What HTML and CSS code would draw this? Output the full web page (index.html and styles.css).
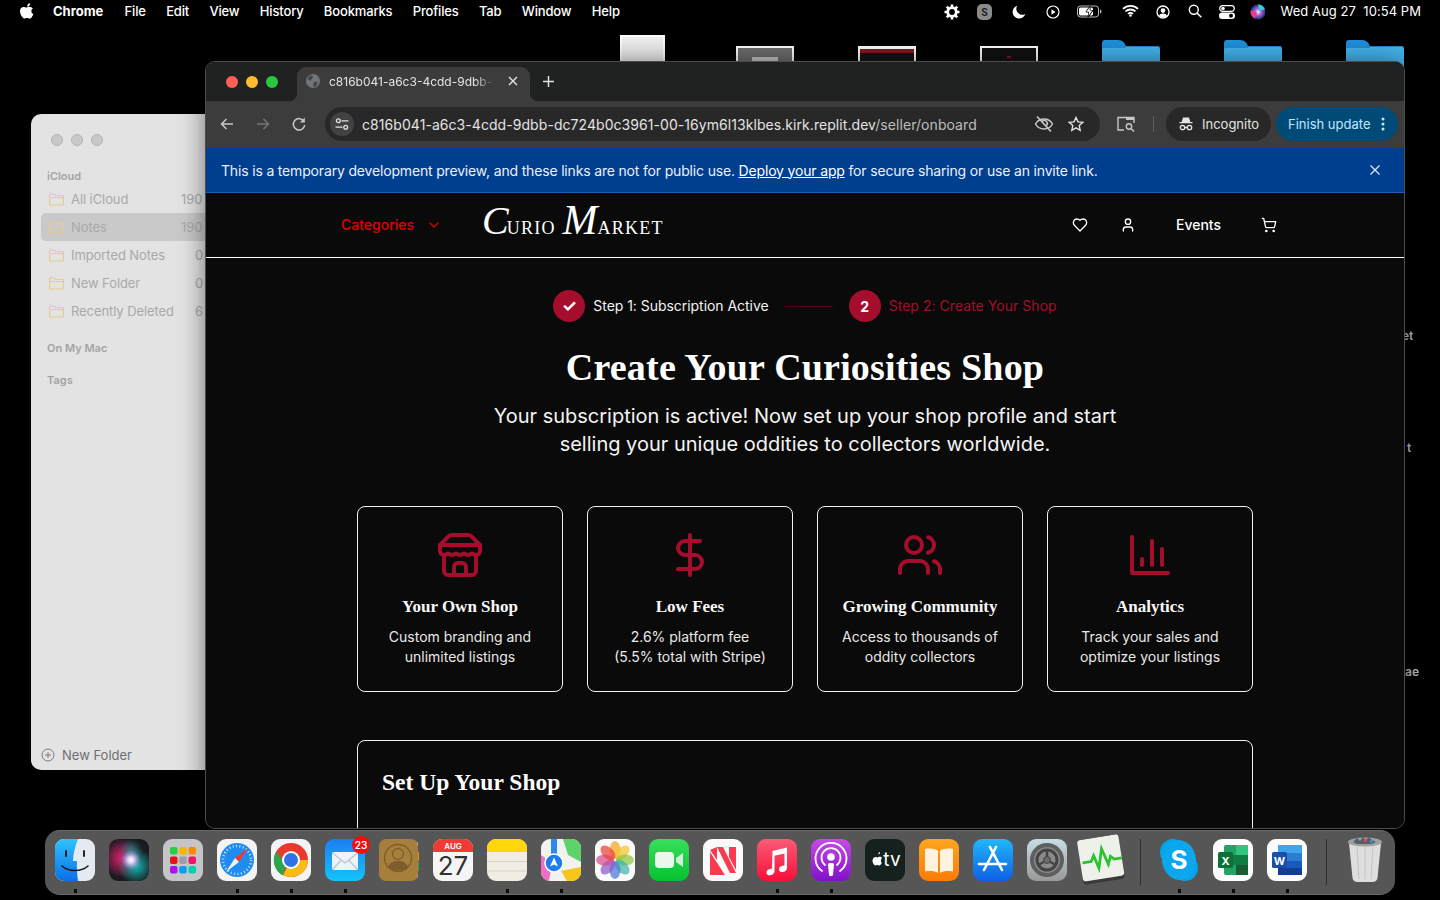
FILE: index.html
```html
<!DOCTYPE html>
<html lang="en">
<head>
<meta charset="utf-8">
<title>Curio Market - Seller onboarding</title>
<link rel="stylesheet" href="styles.css">
</head>
<body>
<div class="desktop">
  <header class="menubar">
    <svg class="apple" viewBox="0 0 16 18" width="14" height="16"><path fill="#fff" d="M11.6 0c.1 1-.3 2-.9 2.7-.6.8-1.6 1.300-2.500 1.200-.1-1 .4-2 .9-2.600C9.700.6 10.800.1 11.600 0zM14.700 6.200c-1.100.7-1.700 1.700-1.700 3 0 1.500.9 2.600 2.300 3.200-.3 1-.8 1.900-1.400 2.800-.8 1.200-1.600 2.400-2.900 2.400s-1.600-.7-3-.7-1.900.7-3 .7c-1.300 0-2.200-1.300-3-2.500C.9 13.500 0 11.200 0 9c0-3 2-4.700 4-4.700 1.200 0 2.200.8 3 .8s1.900-.9 3.300-.9c1.900 0 3.400.8 4.400 2z"/></svg>
    <nav class="menu-left">
      <span class="menu-app">Chrome</span><span>File</span><span>Edit</span><span>View</span><span>History</span><span>Bookmarks</span><span>Profiles</span><span>Tab</span><span>Window</span><span>Help</span>
    </nav>
    <div class="menu-right">
      <svg class="st st-gear" viewBox="0 0 16 16" width="16" height="16"><circle cx="8" cy="8" r="4.300" fill="none" stroke="#fff" stroke-width="2.800"/><path stroke="#fff" stroke-width="2.600" d="M8 .5v3M8 12.500v3M.5 8h3M12.500 8h3M2.700 2.700l2 2M11.300 11.300l2 2M13.300 2.700l-2 2M4.700 11.300l-2 2"/></svg>
      <span class="st st-s">S</span>
      <svg class="st st-moon" viewBox="0 0 14 14" width="14" height="14"><path fill="#fff" d="M5.200.8A6.500 6.500 0 1 0 13.300 9 6 6 0 0 1 5.200.8z"/></svg>
      <svg class="st st-play" viewBox="0 0 14 14" width="14" height="14"><circle cx="7" cy="7" r="6" fill="none" stroke="#fff" stroke-width="1.200"/><path fill="#fff" d="M5.500 4.200l4 2.800-4 2.800z"/></svg>
      <svg class="st st-batt" viewBox="0 0 25 13" width="25" height="13"><rect x=".5" y="1" width="21" height="11" rx="3" fill="none" stroke="#bbb"/><rect x="2" y="2.500" width="14" height="8" rx="1.500" fill="#fff"/><path fill="#000" stroke="#000" d="M13 1l-4 6h3l-1 5 5-6.500h-3z"/><path fill="#fff" d="M12.800 2l-3.400 4.800h2.800l-.8 4 4-5.300h-2.800z"/><path fill="#bbb" d="M23 4.500c1 .3 1.500 1 1.500 2s-.5 1.700-1.500 2z"/></svg>
      <svg class="st st-wifi" viewBox="0 0 17 13" width="17" height="13"><path fill="none" stroke="#fff" stroke-width="1.800" d="M1 4.800a11 11 0 0 1 15 0M3.500 7.400a7.500 7.500 0 0 1 10 0M6 9.900a3.600 3.600 0 0 1 5 0"/><circle cx="8.500" cy="11.500" r="1.300" fill="#fff"/></svg>
      <svg class="st st-user" viewBox="0 0 14 14" width="14" height="14"><circle cx="7" cy="7" r="6" fill="none" stroke="#fff" stroke-width="1.300"/><circle cx="7" cy="5.600" r="2.300" fill="#fff"/><path fill="#fff" d="M3 11c.6-2 2-2.600 4-2.600s3.400.6 4 2.600c-2 1.700-6 1.700-8 0z"/></svg>
      <svg class="st st-search" viewBox="0 0 14 14" width="14" height="14"><circle cx="5.800" cy="5.800" r="4.500" fill="none" stroke="#fff" stroke-width="1.400"/><path stroke="#fff" stroke-width="1.600" d="M9 9l4.300 4.300"/></svg>
      <svg class="st st-ctrl" viewBox="0 0 16 14" width="16" height="14"><rect x=".7" y=".7" width="14.600" height="5.600" rx="2.800" fill="none" stroke="#fff" stroke-width="1.200"/><circle cx="4" cy="3.500" r="1.800" fill="#fff"/><rect y="7.500" width="16" height="6.500" rx="3.250" fill="#fff"/><circle cx="12" cy="10.750" r="2" fill="#000"/></svg>
      <svg class="st st-siri" viewBox="0 0 16 16" width="16" height="16"><defs><radialGradient id="sirimenu"><stop offset="0" stop-color="#fff"/><stop offset=".45" stop-color="#a45fd8"/><stop offset="1" stop-color="#1f2f70"/></radialGradient></defs><circle cx="8" cy="8" r="7.500" fill="url(#sirimenu)"/><path fill="#3ec7d8" d="M8 .5a7.500 7.500 0 0 1 7 5L9 7z"/><path fill="#e93a8f" d="M.7 6.500 7 8l-2 6.500A7.500 7.500 0 0 1 .7 6.500z"/></svg>
      <span class="clock">Wed Aug 27&nbsp;&nbsp;10:54 PM</span>
    </div>
  </header>

  <div class="thumb thumb-white"></div>
  <div class="thumb thumb-gray"><i></i></div>
  <div class="thumb thumb-red"><i></i></div>
  <div class="thumb thumb-dark"><i></i></div>
  <div class="folder folder-a"></div>
  <div class="folder folder-b"></div>
  <div class="folder folder-c"></div>
  <span class="desk-label label-a">et</span>
  <span class="desk-label label-b">t</span>
  <span class="desk-label label-c">ae</span>

  <aside class="notes">
    <div class="notes-lights"><i></i><i></i><i></i></div>
    <h4 class="notes-head notes-head-first">iCloud</h4>
    <ul class="notes-list">
      <li><svg class="nf" viewBox="0 0 15 13"><path d="M.5 11V2a1 1 0 0 1 1-1h3.500l1.500 1.500h7a1 1 0 0 1 1 1V11a1 1 0 0 1-1 1h-12a1 1 0 0 1-1-1zM.5 4.500h14"/></svg><span>All iCloud</span><b>190</b></li>
      <li class="is-active"><svg class="nf" viewBox="0 0 15 13"><path d="M.5 11V2a1 1 0 0 1 1-1h3.500l1.500 1.500h7a1 1 0 0 1 1 1V11a1 1 0 0 1-1 1h-12a1 1 0 0 1-1-1zM.5 4.500h14"/></svg><span>Notes</span><b>190</b></li>
      <li><svg class="nf" viewBox="0 0 15 13"><path d="M.5 11V2a1 1 0 0 1 1-1h3.500l1.500 1.500h7a1 1 0 0 1 1 1V11a1 1 0 0 1-1 1h-12a1 1 0 0 1-1-1zM.5 4.500h14"/></svg><span>Imported Notes</span><b>0</b></li>
      <li><svg class="nf" viewBox="0 0 15 13"><path d="M.5 11V2a1 1 0 0 1 1-1h3.500l1.500 1.500h7a1 1 0 0 1 1 1V11a1 1 0 0 1-1 1h-12a1 1 0 0 1-1-1zM.5 4.500h14"/></svg><span>New Folder</span><b>0</b></li>
      <li><svg class="nf" viewBox="0 0 15 13"><path d="M.5 11V2a1 1 0 0 1 1-1h3.500l1.500 1.500h7a1 1 0 0 1 1 1V11a1 1 0 0 1-1 1h-12a1 1 0 0 1-1-1zM.5 4.500h14"/></svg><span>Recently Deleted</span><b>6</b></li>
    </ul>
    <h4 class="notes-head notes-head-mac">On My Mac</h4>
    <h4 class="notes-head notes-head-tags">Tags</h4>
    <div class="notes-foot"><svg viewBox="0 0 14 14" width="14" height="14"><circle cx="7" cy="7" r="6" fill="none" stroke="#777"/><path stroke="#777" d="M7 4v6M4 7h6"/></svg><span>New Folder</span></div>
  </aside>

  <main class="browser">
    <div class="tabstrip">
      <div class="lights"><i class="l-red"></i><i class="l-yel"></i><i class="l-grn"></i></div>
      <div class="tab">
        <svg class="favicon" viewBox="0 0 14 14" width="14" height="14"><circle cx="7" cy="7" r="7" fill="#70757a"/><path fill="#45484b" d="M3 2c2-.8 4-.4 4 1s-1 1.200-1.500 2.300S4.500 7 3 6.200 1.700 3.500 3 2zM8 8c1.500-.5 3.500 0 3.500 1.200S9.500 13 8.300 13 7 9.500 8 8z"/></svg>
        <span class="tab-title">c816b041-a6c3-4cdd-9dbb-dc724b0c3961</span>
        <svg class="tab-x" viewBox="0 0 10 10" width="10" height="10"><path stroke="#e3e3e3" stroke-width="1.400" d="M1 1l8 8M9 1l-8 8"/></svg>
      </div>
      <svg class="tab-plus" viewBox="0 0 12 12" width="11" height="11"><path stroke="#e3e3e3" stroke-width="1.600" d="M6 0v12M0 6h12"/></svg>
    </div>

    <div class="toolbar">
      <svg class="tb-btn" viewBox="0 0 16 16" width="16" height="16"><path fill="none" stroke="#c7c7c7" stroke-width="1.500" d="M14 8H2.500M7.500 3l-5 5 5 5"/></svg>
      <svg class="tb-btn tb-fwd" viewBox="0 0 16 16" width="16" height="16"><path fill="none" stroke="#757575" stroke-width="1.500" d="M2 8h11.500M8.500 3l5 5-5 5"/></svg>
      <svg class="tb-btn tb-reload" viewBox="0 0 16 16" width="16" height="16"><path fill="none" stroke="#c7c7c7" stroke-width="1.500" d="M13 5.500A5.700 5.700 0 1 0 13.700 9"/><path fill="#c7c7c7" d="M13.800 1.500v5h-5z"/></svg>
      <div class="omnibox">
        <span class="site-ctl"><svg viewBox="0 0 14 14" width="14" height="14"><g fill="none" stroke="#e3e3e3" stroke-width="1.300"><circle cx="3.300" cy="3.800" r="1.900"/><path d="M6.500 3.800h7"/><circle cx="10.700" cy="10.200" r="1.900"/><path d="M.5 10.200h7"/></g></svg></span>
        <span class="url">c816b041-a6c3-4cdd-9dbb-dc724b0c3961-00-16ym6l13klbes.kirk.replit.dev<em>/seller/onboard</em></span>
        <svg class="omni-eye" viewBox="0 0 20 18" width="20" height="18"><g fill="none" stroke="#c7c7c7" stroke-width="1.500"><path d="M1.500 9C3.500 5.500 6.500 4 10 4s6.500 1.500 8.500 5c-2 3.500-5 5-8.500 5S3.500 12.500 1.500 9z"/><path d="M3 1.500 17 16.500" stroke-width="1.700"/><path d="M8 6.500a3 3 0 0 1 4.500 4"/></g></svg>
        <svg class="omni-star" viewBox="0 0 16 16" width="16" height="16"><path fill="none" stroke="#e3e3e3" stroke-width="1.400" d="M8 1.500l2 4.400 4.700.5-3.500 3.200 1 4.700L8 11.900l-4.200 2.400 1-4.700L1.300 6.400 6 5.900z"/></svg>
      </div>
      <svg class="tb-media" viewBox="0 0 18 16" width="18" height="16"><path fill="none" stroke="#c7c7c7" stroke-width="1.400" d="M7 14H1V1.500h16V7"/><path fill="#c7c7c7" d="M1 1h16v3H9V1z"/><circle cx="12" cy="10.500" r="2.700" fill="none" stroke="#c7c7c7" stroke-width="1.400"/><path stroke="#c7c7c7" stroke-width="1.500" d="M14 12.500l3 3"/></svg>
      <span class="tb-div"></span>
      <div class="incognito">
        <svg viewBox="0 0 16 16" width="16" height="16"><path fill="#e3e3e3" d="M5 1.500h6l1.300 4.500h2.200v1.300h-13V6h2.200z"/><g fill="none" stroke="#e3e3e3" stroke-width="1.300"><circle cx="4.500" cy="11.500" r="2.200"/><circle cx="11.500" cy="11.500" r="2.200"/><path d="M6.700 11.500h2.600"/></g></svg>
        <span>Incognito</span>
      </div>
      <div class="update"><span>Finish update</span><svg viewBox="0 0 4 14" width="4" height="14"><circle cx="2" cy="2" r="1.500" fill="#c2e7ff"/><circle cx="2" cy="7" r="1.500" fill="#c2e7ff"/><circle cx="2" cy="12" r="1.500" fill="#c2e7ff"/></svg></div>
    </div>

    <div class="banner">
      <p>This is a temporary development preview, and these links are not for public use. <a href="#deploy">Deploy your app</a> for secure sharing or use an invite link.</p>
      <svg viewBox="0 0 10 10" width="10" height="10"><path stroke="#dbe6f5" stroke-width="1.300" d="M.5.500l9 9M9.500.500l-9 9"/></svg>
    </div>

    <div class="site-nav">
      <button class="cat-btn">Categories<svg viewBox="0 0 24 24" width="16" height="16"><path fill="none" stroke="#e00000" stroke-width="2" stroke-linecap="round" stroke-linejoin="round" d="m6 9 6 6 6-6"/></svg></button>
      <a class="logo" href="#home"><span class="logo-cap">C</span><span class="logo-rest logo-rest-a">URIO</span><span class="logo-cap logo-cap-m">M</span><span class="logo-rest">ARKET</span></a>
      <div class="nav-right">
        <svg class="lucide-sm" viewBox="0 0 24 24" width="16" height="16"><path d="M19 14c1.490-1.460 3-3.210 3-5.500A5.500 5.500 0 0 0 16.500 3c-1.760 0-3 .5-4.500 2-1.500-1.500-2.740-2-4.500-2A5.500 5.500 0 0 0 2 8.500c0 2.300 1.500 4.050 3 5.500l7 7Z"/></svg>
        <svg class="lucide-sm" viewBox="0 0 24 24" width="16" height="16"><path d="M19 21v-2a4 4 0 0 0-4-4H9a4 4 0 0 0-4 4v2"/><circle cx="12" cy="7" r="4"/></svg>
        <span class="nav-events">Events</span>
        <svg class="lucide-sm" viewBox="0 0 24 24" width="16" height="16"><circle cx="8" cy="21" r="1"/><circle cx="19" cy="21" r="1"/><path d="M2.050 2.050h2l2.660 12.420a2 2 0 0 0 2 1.580h9.780a2 2 0 0 0 1.950-1.570l1.650-7.430H5.120"/></svg>
      </div>
    </div>

    <div class="page">
      <div class="stepper">
        <span class="step-dot step-check">✓</span><span class="step-text">Step 1: Subscription Active</span>
        <span class="step-line"></span>
        <span class="step-dot">2</span><span class="step-text step-text-current">Step 2: Create Your Shop</span>
      </div>
      <h1 class="title">Create Your Curiosities Shop</h1>
      <p class="subtitle">Your subscription is active! Now set up your shop profile and start<br>selling your unique oddities to collectors worldwide.</p>
      <section class="cards">
        <article class="card">
          <svg class="card-icon" viewBox="0 0 24 24"><path d="m2 7 4.410-4.410A2 2 0 0 1 7.830 2h8.340a2 2 0 0 1 1.420.59L22 7"/><path d="M4 12v8a2 2 0 0 0 2 2h12a2 2 0 0 0 2-2v-8"/><path d="M15 22v-4a2 2 0 0 0-2-2h-2a2 2 0 0 0-2 2v4"/><path d="M2 7h20"/><path d="M22 7v3a2 2 0 0 1-2 2a2.700 2.700 0 0 1-1.590-.63.700.700 0 0 0-.82 0A2.700 2.700 0 0 1 16 12a2.700 2.700 0 0 1-1.590-.63.700.700 0 0 0-.82 0A2.700 2.700 0 0 1 12 12a2.700 2.700 0 0 1-1.590-.63.700.700 0 0 0-.82 0A2.700 2.700 0 0 1 8 12a2.700 2.700 0 0 1-1.590-.63.700.700 0 0 0-.82 0A2.700 2.700 0 0 1 4 12a2 2 0 0 1-2-2V7"/></svg>
          <h3>Your Own Shop</h3>
          <p>Custom branding and<br>unlimited listings</p>
        </article>
        <article class="card">
          <svg class="card-icon" viewBox="0 0 24 24"><path d="M12 2v20"/><path d="M17 5H9.500a3.500 3.500 0 0 0 0 7h5a3.500 3.500 0 0 1 0 7H6"/></svg>
          <h3>Low Fees</h3>
          <p>2.6% platform fee<br>(5.5% total with Stripe)</p>
        </article>
        <article class="card">
          <svg class="card-icon" viewBox="0 0 24 24"><path d="M16 21v-2a4 4 0 0 0-4-4H6a4 4 0 0 0-4 4v2"/><circle cx="9" cy="7" r="4"/><path d="M22 21v-2a4 4 0 0 0-3-3.870"/><path d="M16 3.130a4 4 0 0 1 0 7.750"/></svg>
          <h3>Growing Community</h3>
          <p>Access to thousands of<br>oddity collectors</p>
        </article>
        <article class="card">
          <svg class="card-icon" viewBox="0 0 24 24"><path d="M3 3v18h18"/><path d="M18 17V9"/><path d="M13 17V5"/><path d="M8 17v-3"/></svg>
          <h3>Analytics</h3>
          <p>Track your sales and<br>optimize your listings</p>
        </article>
      </section>
      <section class="setup">
        <h2>Set Up Your Shop</h2>
        <label class="setup-label">Shop Name *</label>
      </section>
    </div>
  </main>

  <footer class="dock">
    <div class="di on"><svg viewBox="0 0 40 42"><defs><linearGradient id="fb" x1="0" y1="0" x2="0" y2="1"><stop offset="0" stop-color="#2fc3fb"/><stop offset="1" stop-color="#0b6fe8"/></linearGradient></defs><rect width="40" height="42" rx="9" fill="#e4eaf2"/><path fill="url(#fb)" d="M9 0h14c-3 8-5 15-5 22h4c-.3 6 0 13 1 20H9a9 9 0 0 1-9-9V9a9 9 0 0 1 9-9z"/><path stroke="#111" stroke-width="1.800" stroke-linecap="round" d="M11 12v5M29 12v5"/><path fill="none" stroke="#111" stroke-width="1.500" stroke-linecap="round" d="M7 27c7 6 19 6 26 0"/></svg></div>
    <div class="di"><svg viewBox="0 0 40 42"><defs><radialGradient id="si1"><stop offset="0" stop-color="#e0206f"/><stop offset="1" stop-color="#e0206f" stop-opacity="0"/></radialGradient><radialGradient id="si2"><stop offset="0" stop-color="#16b8b0"/><stop offset="1" stop-color="#16b8b0" stop-opacity="0"/></radialGradient><radialGradient id="si3"><stop offset="0" stop-color="#fff"/><stop offset=".35" stop-color="#d8c8f0"/><stop offset="1" stop-color="#9a7ad8" stop-opacity="0"/></radialGradient></defs><rect width="40" height="42" rx="9" fill="#191a20"/><circle cx="13" cy="19" r="20" fill="url(#si1)"/><circle cx="27" cy="27" r="18" fill="url(#si2)"/><circle cx="22" cy="12" r="12" fill="url(#si2)" opacity=".6"/><circle cx="22" cy="21" r="10" fill="url(#si3)"/></svg></div>
    <div class="di"><svg viewBox="0 0 40 42"><rect width="40" height="42" rx="9" fill="#c3c5c7"/><g><rect x="7" y="8" width="7.500" height="7.500" rx="2" fill="#28cd41"/><rect x="16.200" y="8" width="7.500" height="7.500" rx="2" fill="#f7b500"/><rect x="25.500" y="8" width="7.500" height="7.500" rx="2" fill="#f58a0b"/><rect x="7" y="17.500" width="7.500" height="7.500" rx="2" fill="#e8111d"/><rect x="16.200" y="17.500" width="7.500" height="7.500" rx="2" fill="#9aa0a6"/><rect x="25.500" y="17.500" width="7.500" height="7.500" rx="2" fill="#ef1568"/><rect x="7" y="27" width="7.500" height="7.500" rx="2" fill="#a914e8"/><rect x="16.200" y="27" width="7.500" height="7.500" rx="2" fill="#0d9cf5"/><rect x="25.500" y="27" width="7.500" height="7.500" rx="2" fill="#04d1b0"/></g></svg></div>
    <div class="di on"><svg viewBox="0 0 40 42"><rect width="40" height="42" rx="9" fill="#f4f4f4"/><circle cx="20" cy="21" r="17" fill="#1e8cf0"/><circle cx="20" cy="21" r="14" fill="none" stroke="#cfe6fb" stroke-width="2.500" stroke-dasharray="1 2.400"/><path fill="#f03a2e" d="M31 9l-13 10 4 4z"/><path fill="#f4f4f4" d="M9 33l13-10-4-4z"/></svg></div>
    <div class="di on"><svg viewBox="0 0 40 42"><rect width="40" height="42" rx="9" fill="#f4f4f4"/><circle cx="20" cy="21" r="17" fill="#e8392c"/><path fill="#f9bc15" d="M20 21h17a17 17 0 0 1-25 15z"/><path fill="#2aa44d" d="M5.300 12.500 15 26l-3 10.500A17 17 0 0 1 5.300 12.500z"/><circle cx="20" cy="21" r="9" fill="#fff"/><circle cx="20" cy="21" r="7" fill="#2f73e6"/></svg></div>
    <div class="di on"><svg viewBox="0 0 40 42"><defs><linearGradient id="ma" x1="0" y1="0" x2="0" y2="1"><stop offset="0" stop-color="#1d7df2"/><stop offset="1" stop-color="#12c4fb"/></linearGradient></defs><rect width="40" height="42" rx="9" fill="url(#ma)"/><rect x="7" y="13" width="26" height="18" rx="2" fill="#eef3f8"/><path fill="none" stroke="#b6c6d6" stroke-width="1.200" d="M7.500 14 20 24 32.500 14M7.500 30.500l9-9.500M32.500 30.500l-9-9.500"/></svg><span class="badge">23</span></div>
    <div class="di"><svg viewBox="0 0 40 42"><rect x="34" y="3" width="5" height="36" rx="2" fill="#e7e3d8"/><rect x="36" y="13" width="4" height="9" fill="#f58a0b"/><rect x="36" y="23" width="4" height="9" fill="#29a84f"/><rect width="39" height="42" rx="7" fill="#a67f3c"/><circle cx="19" cy="19" r="13.500" fill="none" stroke="#7d5e2a" stroke-width="1.300"/><circle cx="19" cy="15" r="5.500" fill="none" stroke="#7d5e2a" stroke-width="1.300"/><path fill="#7d5e2a" d="M9 28c2-5 6-6 10-6s8 1 10 6c-5 5-15 5-20 0z"/></svg></div>
    <div class="di"><svg viewBox="0 0 40 42"><rect width="40" height="42" rx="9" fill="#f5f5f5"/><path fill="#f03a36" d="M9 0h22a9 9 0 0 1 9 9v4H0V9a9 9 0 0 1 9-9z"/><text x="20" y="10" class="cal-mon">AUG</text><text x="20" y="36" class="cal-day">27</text></svg></div>
    <div class="di on"><svg viewBox="0 0 40 42"><rect width="40" height="42" rx="9" fill="#f1ede2"/><path fill="#ffd60a" d="M9 0h22a9 9 0 0 1 9 9v4H0V9a9 9 0 0 1 9-9z"/><path stroke="#d6d1c5" d="M0 22.500h40M0 32h40"/></svg></div>
    <div class="di on"><svg viewBox="0 0 40 42"><rect width="40" height="42" rx="9" fill="#f2f2f0"/><path fill="#5fd36b" d="M22 0h9a9 9 0 0 1 9 9v14L27 16z"/><path fill="#f06fc4" d="M0 16l11 8-3 18a9 9 0 0 1-8-9z"/><path fill="#f8c51c" d="M26 42l-6-10 20-4v5a9 9 0 0 1-9 9z"/><path stroke="#2b8af0" stroke-width="6" d="M13 0v24"/><circle cx="13" cy="24" r="9" fill="#1e7cf0" stroke="#fff" stroke-width="1.500"/><path fill="#fff" d="M13 18.500l4 9-4-2-4 2z"/></svg></div>
    <div class="di"><svg viewBox="0 0 40 42"><rect width="40" height="42" rx="9" fill="#fbfbfb"/><g transform="translate(20 21)" fill-opacity=".72"><ellipse cy="-10" rx="5.500" ry="9" fill="#f5a623"/><ellipse cy="-10" rx="5.500" ry="9" fill="#f7c52a" transform="rotate(45)"/><ellipse cy="-10" rx="5.500" ry="9" fill="#8cc63f" transform="rotate(90)"/><ellipse cy="-10" rx="5.500" ry="9" fill="#3fb5a3" transform="rotate(135)"/><ellipse cy="-10" rx="5.500" ry="9" fill="#4a78d6" transform="rotate(180)"/><ellipse cy="-10" rx="5.500" ry="9" fill="#8c5ac8" transform="rotate(225)"/><ellipse cy="-10" rx="5.500" ry="9" fill="#d64a8c" transform="rotate(270)"/><ellipse cy="-10" rx="5.500" ry="9" fill="#e8443a" transform="rotate(315)"/></g></svg></div>
    <div class="di"><svg viewBox="0 0 40 42"><defs><linearGradient id="ft" x1="0" y1="0" x2="0" y2="1"><stop offset="0" stop-color="#38e05c"/><stop offset="1" stop-color="#05c12f"/></linearGradient></defs><rect width="40" height="42" rx="9" fill="url(#ft)"/><rect x="6" y="13" width="19" height="16" rx="4" fill="#eaf7ec"/><path fill="#d4efd8" d="M27 19l7-5v14l-7-5z"/></svg></div>
    <div class="di"><svg viewBox="0 0 40 42"><rect width="40" height="42" rx="9" fill="#fafafa"/><path fill="#fa3a4e" d="M7 11l7-3v13zM14 8h6l13 26h-6zM26 8h7v23l-7-13z"/><path fill="#fa3a4e" d="M7 13l15 23h-15z"/></svg></div>
    <div class="di on"><svg viewBox="0 0 40 42"><defs><linearGradient id="mu" x1="0" y1="0" x2="0" y2="1"><stop offset="0" stop-color="#fb5b78"/><stop offset="1" stop-color="#f70f38"/></linearGradient></defs><rect width="40" height="42" rx="9" fill="url(#mu)"/><path fill="#fff" d="M15.500 12 30 8.500v20c0 2.500-1.500 4-4 4.500-2.500.4-4-.9-4-2.800 0-2 1.500-3 3.500-3.400l2-.4V14.500l-10 2.200v15c0 2.500-1.500 4-4 4.500-2.500.4-4-.9-4-2.800 0-2 1.500-3 3.500-3.400l2-.4z"/></svg></div>
    <div class="di on"><svg viewBox="0 0 40 42"><defs><linearGradient id="po" x1="0" y1="0" x2="0" y2="1"><stop offset="0" stop-color="#c64be8"/><stop offset="1" stop-color="#8112c9"/></linearGradient></defs><rect width="40" height="42" rx="9" fill="url(#po)"/><g fill="none" stroke="#fff" stroke-width="1.800" stroke-linecap="round"><path d="M11 32a15.500 15.500 0 1 1 18 0"/><path d="M14 26a9.500 9.500 0 1 1 12 0"/></g><circle cx="20" cy="18" r="3.800" fill="#fff"/><path fill="#fff" d="M17 25c0-1.500 6-1.500 6 0l-1 11c-.2 1.500-3.800 1.500-4 0z"/></svg></div>
    <div class="di"><svg viewBox="0 0 40 42"><rect width="40" height="42" rx="9" fill="#14211f"/><path fill="#fff" d="M13.300 15.500c-.1-1.200.9-2.300 1.800-2.500.2 1.300-1 2.500-1.800 2.500zM16.700 24c-.7 1.600-1.400 2.500-2.300 2.500-.8 0-1-.5-2-.5s-1.300.5-2 .5C9 26.500 7.500 24 7.500 21.600c0-2.300 1.500-3.700 3-3.700.9 0 1.500.6 2 .6s1.200-.7 2.300-.7c.9 0 1.800.5 2.300 1.300-1.700 1-1.400 3.900-.4 4.900z"/><text x="27" y="27" class="tv">tv</text></svg></div>
    <div class="di"><svg viewBox="0 0 40 42"><defs><linearGradient id="bk" x1="0" y1="0" x2="0" y2="1"><stop offset="0" stop-color="#ffa51f"/><stop offset="1" stop-color="#fb7b04"/></linearGradient></defs><rect width="40" height="42" rx="9" fill="url(#bk)"/><path fill="#fff3e0" d="M19 12v22c-3-2-8-2.500-13-1.500V10c5-1 10-.5 13 2zM21 12v22c3-2 8-2.500 13-1.500V10c-5-1-10-.5-13 2z"/></svg></div>
    <div class="di"><svg viewBox="0 0 40 42"><defs><linearGradient id="as" x1="0" y1="0" x2="0" y2="1"><stop offset="0" stop-color="#21b7f8"/><stop offset="1" stop-color="#0d5fe6"/></linearGradient></defs><rect width="40" height="42" rx="9" fill="url(#as)"/><path fill="none" stroke="#fff" stroke-width="2.600" stroke-linecap="round" d="M23 8 11 31M17 8l12 23M6 25h27"/></svg></div>
    <div class="di"><svg viewBox="0 0 40 42"><defs><linearGradient id="sy" x1="0" y1="0" x2="0" y2="1"><stop offset="0" stop-color="#c7dde6"/><stop offset="1" stop-color="#999"/></linearGradient></defs><rect width="40" height="42" rx="9" fill="url(#sy)"/><circle cx="20" cy="21" r="17" fill="#5f5f60"/><circle cx="20" cy="21" r="13" fill="#8b8b8c"/><circle cx="20" cy="21" r="10" fill="none" stroke="#444" stroke-width="3"/><path stroke="#444" stroke-width="2.500" d="M20 21V11M20 21l8.600 5M20 21l-8.600 5"/><circle cx="20" cy="21" r="3.500" fill="#6a6a6b" stroke="#444"/></svg></div>
    <div class="di di-tilt"><svg viewBox="0 0 40 42"><rect x="1" y="1" width="38" height="40" rx="3" fill="#3a3a3a"/><rect x="1" y="0" width="38" height="38" rx="3" fill="#eef0ea"/><path fill="none" stroke="#2ac22e" stroke-width="2.500" d="M3 21h8l3-5 3 12 5-17 4 15 3-7 3 3h7"/></svg></div>
    <span class="dock-sep"></span>
    <div class="di on"><svg viewBox="0 0 40 42"><circle cx="14" cy="13" r="13" fill="#02a4ea"/><circle cx="26" cy="29" r="13" fill="#02a4ea"/><ellipse cx="20" cy="21" rx="17" ry="20" fill="#0ca8ee" transform="rotate(-8 20 21)"/><text x="20" y="30" class="sky">S</text></svg></div>
    <div class="di on"><svg viewBox="0 0 40 42"><rect width="40" height="42" rx="9" fill="#fcfcfc"/><rect x="11" y="6" width="24" height="30" rx="2" fill="#21a366"/><rect x="23" y="6" width="12" height="10" fill="#33c481"/><rect x="11" y="16" width="24" height="10" fill="#107c41"/><rect x="23" y="26" width="12" height="10" fill="#185c37"/><rect x="5" y="13" width="15" height="16" rx="1.500" fill="#0d7238"/><text x="12.500" y="25.500" class="ms">X</text></svg></div>
    <div class="di on"><svg viewBox="0 0 40 42"><rect width="40" height="42" rx="9" fill="#fcfcfc"/><rect x="11" y="6" width="24" height="30" rx="2" fill="#2b7cd3"/><rect x="11" y="6" width="24" height="8" fill="#41a5ee"/><rect x="11" y="22" width="24" height="7" fill="#185abd"/><rect x="11" y="29" width="24" height="7" fill="#103f91"/><rect x="5" y="13" width="15" height="16" rx="1.500" fill="#1a4fa8"/><text x="12.500" y="25.500" class="ms">W</text></svg></div>
    <span class="dock-sep"></span>
    <div class="di di-trash"><svg viewBox="0 0 40 48"><path fill="#dedede" d="M4 8h32l-3.500 35c-.2 2-2 4-5 4h-15c-3 0-4.800-2-5-4z"/><path stroke="#c4c4c4" d="M12 12l2 32M20 12v32M28 12l-2 32"/><ellipse cx="20" cy="7" rx="17" ry="4.500" fill="#a0a0a0"/><path fill="#57606a" d="M8 7l4-4 3 3 3-4 3 3 3-3 3 3 4 2-4 2H12z"/><path fill="#d24a3c" d="M19 4h3v3h-3z"/><path fill="#3d86d6" d="M25 5h3v3h-3z"/></svg></div>
  </footer>
</div>
</body>
</html>
```

FILE: styles.css
```css
* { box-sizing: border-box; }
html, body { margin: 0; padding: 0; height: 100%; background: #000; }
body { font-family: "Inter", "Liberation Sans", sans-serif; overflow: hidden; }
p, h1, h2, h3, h4, ul { margin: 0; padding: 0; }

.desktop { position: relative; width: 1440px; height: 900px; background: #000; overflow: hidden; }

/* Menu bar */
.menubar { display: flex; align-items: center; height: 22px; padding: 0 19px 0 20px; color: #fff; font-size: 13px; }
.apple { flex: none; }
.menu-left { display: flex; gap: 20.300px; margin-left: 19px; font-weight: 500; letter-spacing: -.15px; }
.menu-app { margin-right: 1px; font-weight: 700; letter-spacing: 0; }
.menu-right { position: relative; margin-left: auto; height: 22px; width: 521px; }
.st { position: absolute; top: 4px; }
.st-gear { left: 44px; }
.st-s { left: 77px; top: 4px; width: 15px; height: 16px; border-radius: 5px; background: #8a8a8a; color: #222; font-size: 10px; font-weight: 700; text-align: center; line-height: 16px; }
.st-moon { left: 112px; top: 5px; }
.st-play { left: 146px; top: 5px; }
.st-batt { left: 177px; top: 5px; }
.st-wifi { left: 222px; top: 4px; }
.st-user { left: 256px; top: 5px; }
.st-search { left: 288px; top: 4px; }
.st-ctrl { left: 319px; top: 5px; }
.st-siri { left: 350px; top: 4px; }
.clock { position: absolute; right: 0; top: 3px; white-space: nowrap; letter-spacing: .05px; }

/* Desktop items */
.thumb { position: absolute; border: 2px solid #fff; background: #eee; }
.thumb-white { left: 620px; top: 35px; width: 45px; height: 30px; }
.thumb-gray { left: 736px; top: 46px; width: 58px; height: 20px; background: #6e6e6e; }
.thumb-red { left: 858px; top: 46px; width: 58px; height: 20px; background: #151515; border-top-width: 3px; }
.thumb-dark { left: 980px; top: 46px; width: 58px; height: 20px; background: #111; }
.thumb-gray i { display: block; width: 26px; height: 4px; margin: 9px auto 0; background: #c8c8c8; }
.thumb-red i { display: block; height: 4px; background: #8c1120; }
.thumb-dark i { display: block; width: 4px; height: 2px; margin: 8px auto 0; background: #8c1120; }
.folder { position: absolute; top: 46px; width: 58px; height: 22px; border-radius: 3px 3px 0 0; background: #45b6ef; box-shadow: inset 0 1px 0 #1c86cf; }
.folder::before { content: ""; position: absolute; left: 0; top: -6px; width: 24px; height: 8px; border-radius: 3px 8px 0 0; background: #1f90dc; }
.folder-a { left: 1102px; }
.folder-b { left: 1224px; }
.folder-c { left: 1346px; }
.desk-label { position: absolute; color: #bbb; font-size: 12px; font-weight: 600; }
.label-a { left: 1402px; top: 328px; }
.label-b { left: 1407px; top: 440px; }
.label-c { left: 1405px; top: 664px; }

/* Notes window */
.notes { position: absolute; left: 31px; top: 114px; width: 190px; height: 656px; border-radius: 10px 0 0 10px; background: #e3e3e3; color: #a9a9a9; font-size: 13px; }
.notes-lights { display: flex; gap: 8px; padding: 20px 0 0 20px; }
.notes-lights i { width: 12px; height: 12px; border-radius: 50%; background: #c8c8c8; border: 1px solid #b5b5b5; }
.notes-head { font-size: 11px; font-weight: 600; color: #a3a3a3; padding-left: 16px; }
.notes-head-first { margin-top: 23px; line-height: 14px; }
.notes-list { list-style: none; margin: 2px 0 0 10px; }
.notes-list li { display: flex; align-items: center; height: 28px; padding-left: 8px; border-radius: 5px 0 0 5px; }
.notes-list li.is-active { background: #c9c9c9; }
.nf { flex: none; width: 15px; height: 13px; margin-right: 7px; fill: none; stroke: #e5cc90; stroke-width: 1.200; }
.notes-list span { flex: 1; letter-spacing: -.08px; }
.notes-list b { font-weight: 400; width: 40px; text-align: left; color: #a9a9a9; }
.notes-list li:nth-child(n+3) b { padding-left: 14px; }
.notes-head-mac { margin-top: 16px; line-height: 14px; }
.notes-head-tags { margin-top: 18px; line-height: 14px; }
.notes-foot { position: absolute; left: 10px; bottom: 7px; display: flex; align-items: center; gap: 7px; color: #6f6f6f; }

/* Browser */
.browser { position: absolute; left: 205px; top: 61px; width: 1200px; height: 768px; display: flex; flex-direction: column; overflow: hidden; background: #0a0a0a; border: 1px solid #4c4c4c; border-radius: 10px; box-shadow: 0 0 26px rgba(0,0,0,.5); color: #fff; }
.tabstrip { display: flex; align-items: flex-end; flex: none; height: 39px; background: #202222; }
.lights { display: flex; gap: 8px; align-self: center; margin-left: 20px; }
.lights i { width: 12px; height: 12px; border-radius: 50%; }
.l-red { background: #ff5f57; }
.l-yel { background: #febc2e; }
.l-grn { background: #28c840; }
.tab { position: relative; display: flex; align-items: center; width: 233px; height: 34px; margin-left: 19px; padding: 0 12px 6px 9px; border-radius: 9px 9px 0 0; background: #3c3c3c; font-size: 12px; color: #e3e3e3; }
.tab::before, .tab::after { content: ""; position: absolute; bottom: 0; width: 8px; height: 8px; }
.tab::before { left: -8px; background: radial-gradient(circle at 0 0, #202222 8px, #3c3c3c 8.5px); }
.tab::after { right: -8px; background: radial-gradient(circle at 100% 0, #202222 8px, #3c3c3c 8.5px); }
.favicon { flex: none; }
.tab-title { flex: 1; margin: 0 14px 0 9px; overflow: hidden; white-space: nowrap; -webkit-mask-image: linear-gradient(90deg, #000 88%, transparent); mask-image: linear-gradient(90deg, #000 88%, transparent); }
.tab-x { flex: none; }
.tab-plus { align-self: center; margin-left: 13px; }

.toolbar { display: flex; align-items: center; flex: none; height: 47px; padding: 0 6px 1px 13px; background: #3c3c3c; }
.tb-btn { flex: none; }
.tb-fwd { margin-left: 20px; }
.tb-reload { margin-left: 20px; }
.omnibox { display: flex; align-items: center; flex: none; width: 775px; height: 34px; margin-left: 18px; padding: 0 16px 0 5px; border-radius: 17px; background: #282828; }
.site-ctl { display: flex; align-items: center; justify-content: center; width: 24px; height: 24px; border-radius: 50%; background: #424242; flex: none; }
.url { flex: 1; margin-left: 8px; font-family: "Inter", sans-serif; font-size: 14px; letter-spacing: .06px; color: #e3e3e3; white-space: nowrap; overflow: hidden; }
.url em { font-style: normal; color: #bdbdbd; }
.omni-eye { flex: none; margin-right: 14px; }
.tb-media { flex: none; margin-left: 17px; }
.tb-div { width: 1px; height: 16px; margin: 0 12px 0 18px; background: #5e5e5e; flex: none; }
.incognito { display: flex; align-items: center; gap: 8px; width: 105px; height: 34px; padding-left: 12px; border-radius: 17px; background: #282828; font-size: 13px; color: #e3e3e3; flex: none; }
.update { display: flex; align-items: center; justify-content: space-between; width: 122px; height: 34px; margin-left: 5px; padding: 0 13px 0 12px; border-radius: 17px; background: #004a77; font-size: 13px; color: #c2e7ff; flex: none; }

.banner { display: flex; align-items: center; justify-content: space-between; flex: none; height: 45px; padding: 0 24px 0 15px; background: #003e8f; border-bottom: 1px solid #1c5fb3; font-size: 14px; letter-spacing: -.17px; color: #eaf1fb; }
.banner a { color: #fff; font-weight: 400; text-decoration: underline; }

.site-nav { display: flex; align-items: center; flex: none; height: 65px; padding: 0 127px 1px 135px; background: #0a0a0a; border-bottom: 1px solid #fff; }
.cat-btn { display: flex; align-items: center; gap: 12px; padding: 0; border: 0; background: none; color: #e00000; font: 500 14px "Inter", sans-serif; }
.logo { display: flex; align-items: baseline; margin: 0 0 8px 40px; color: #fff; text-decoration: none; font-family: "Liberation Serif", serif; }
.logo-cap { font-size: 40px; line-height: 40px; font-style: italic; }
.logo-cap-m { margin-left: 7px; font-size: 42px; }
.logo-rest { font-size: 18px; letter-spacing: 1.200px; }
.logo-rest-a { margin-left: -2px; }
.nav-right { display: flex; align-items: center; margin-left: auto; }
.lucide-sm { flex: none; fill: none; stroke: #fff; stroke-width: 2; stroke-linecap: round; stroke-linejoin: round; }
.nav-right .lucide-sm:nth-child(2) { margin-left: 32px; }
.nav-right .lucide-sm:nth-child(4) { margin-left: 40px; }
.nav-events { margin-left: 40px; font-size: 14px; font-weight: 500; }

/* Page */
.page { flex: 1; min-height: 0; overflow: hidden; padding-top: 32px; background: #0a0a0a; }
.stepper { display: flex; align-items: center; justify-content: center; font-size: 14px; }
.step-dot { display: flex; align-items: center; justify-content: center; width: 32px; height: 32px; border-radius: 50%; background: #a50d2d; color: #fff; font-weight: 700; font-size: 14px; }
.step-check { font-size: 17px; }
.step-text { margin-left: 8px; padding-bottom: 2px; letter-spacing: -.04px; color: #f2f2f2; }
.step-text-current { letter-spacing: .04px; color: #a50d2d; }
.step-line { width: 48px; height: 1px; margin: 0 16px; background: #4d0716; }
.title { margin-top: 25px; font: 700 38px/40px "Liberation Serif", serif; letter-spacing: .18px; text-align: center; color: #fff; }
.subtitle { margin-top: 15px; font-size: 20px; line-height: 28px; text-align: center; color: #f4f4f4; }
.cards { display: grid; grid-template-columns: repeat(4, 1fr); gap: 24px; width: 896px; margin: 48px auto 0; }
.card { height: 186px; padding: 24px 10px; border: 1px solid #f2f2f2; border-radius: 8px; text-align: center; }
.card-icon { display: block; width: 48px; height: 48px; margin: 0 auto 16px; fill: none; stroke: #a50d2d; stroke-width: 2; stroke-linecap: round; stroke-linejoin: round; }
.card h3 { font: 700 17px/24px "Liberation Serif", serif; color: #f7f7f7; }
.card p { margin-top: 8px; font-size: 14px; line-height: 20px; color: #e8e8e8; }
.setup { width: 896px; height: 300px; margin: 48px auto 0; padding: 24px; border: 1px solid #f2f2f2; border-radius: 8px; }
.setup h2 { font: 700 23.500px/34px "Liberation Serif", serif; color: #fff; }
.setup-label { display: block; margin-top: 25px; font-size: 14px; line-height: 20px; color: #ddd; }

/* Dock */
.dock { position: absolute; left: 45px; top: 830px; width: 1350px; height: 65px; display: flex; align-items: flex-start; gap: 14px; padding: 8px 10px 0; background: #565656; border: 1px solid #6a6a6a; border-left-width: 0; border-right-width: 0; border-radius: 15px; }
.di { position: relative; flex: none; width: 40px; height: 42px; }
.di svg { display: block; width: 40px; height: 42px; }
.di.on::after { content: ""; position: absolute; left: 19px; top: 50px; width: 3px; height: 4px; background: #0c0c0c; }
.di-tilt svg { transform: rotate(-9deg) scale(1.100); }
.di-trash svg { height: 48px; margin-top: -4px; }
.dock-sep { flex: none; width: 1px; height: 46px; margin: 0 4px 0 5px; background: #2e2e2e; }
.badge { position: absolute; left: 27px; top: -3px; width: 18px; height: 18px; border-radius: 50%; background: #f30d0d; color: #fff; font-size: 10px; font-weight: 600; line-height: 18px; text-align: center; }
.cal-mon { font: 600 8px "Inter", sans-serif; fill: #fff; text-anchor: middle; }
.cal-day { font: 400 26px "Inter", sans-serif; fill: #333; text-anchor: middle; }
.tv { font: 400 19px "Inter", sans-serif; fill: #fff; text-anchor: middle; }
.sky { font: 700 26px "Inter", sans-serif; fill: #fff; text-anchor: middle; }
.ms { font: 700 11px "Inter", sans-serif; fill: #fff; text-anchor: middle; }
```
